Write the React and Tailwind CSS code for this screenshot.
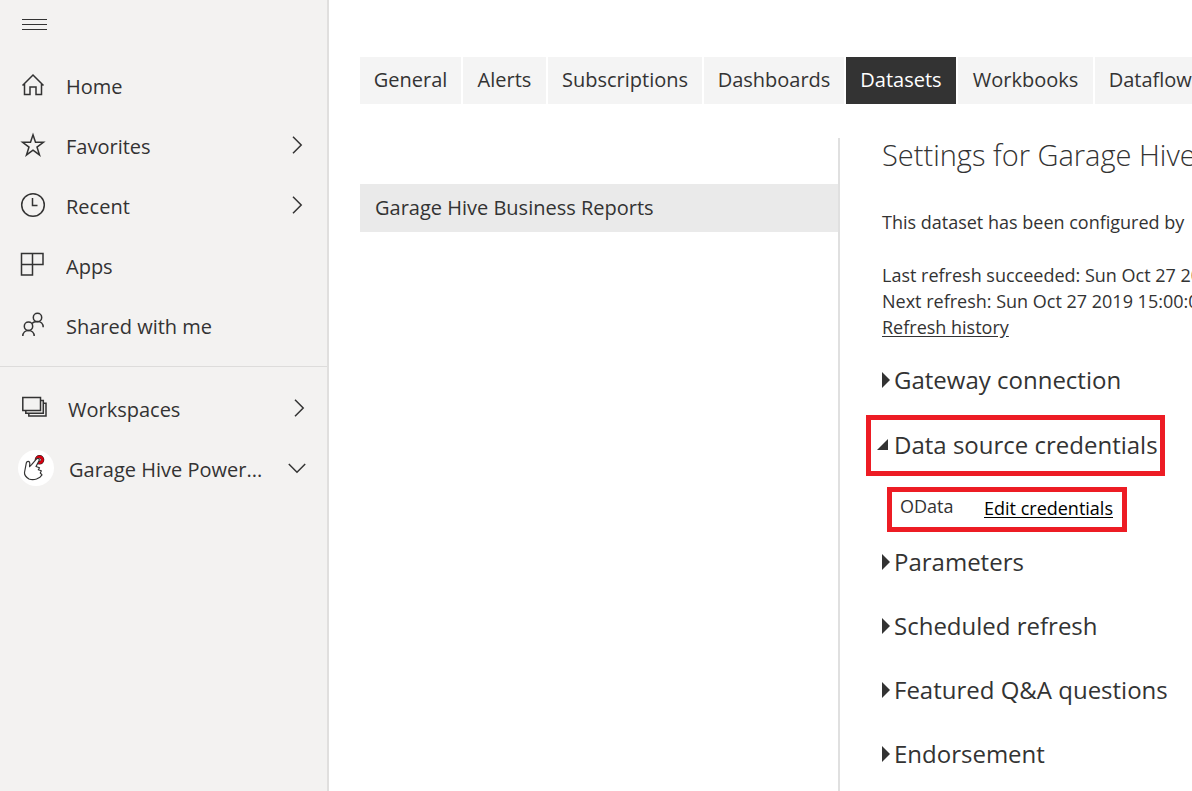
const stroke = { fill: 'none', stroke: '#333', strokeWidth: 1.5 };

function HomeIcon() {
  return (
    <svg width="26" height="26" viewBox="0 0 26 26" {...stroke} aria-hidden="true">
      <path d="M2.5 13.5 13 3l10.500 10.500M4.500 11.700V22.500H10V15h6v7.500h5.500V11.700" />
    </svg>
  );
}

function StarIcon() {
  return (
    <svg width="26" height="26" viewBox="0 0 26 26" {...stroke} aria-hidden="true">
      <path d="m13 2.800 2.500 7.500h7.900l-6.400 4.800 2.500 7.800-6.500-4.800-6.500 4.800L9 15.100l-6.400-4.800h7.900z" />
    </svg>
  );
}

function ClockIcon() {
  return (
    <svg width="26" height="26" viewBox="0 0 26 26" {...stroke} aria-hidden="true">
      <circle cx="13" cy="13" r="11.300" />
      <path d="M12.500 6v7.500h5" />
    </svg>
  );
}

function AppsIcon() {
  return (
    <svg width="26" height="26" viewBox="0 0 26 26" {...stroke} aria-hidden="true">
      <path d="M1.500 1.500h21.500v11H12.500v10.500h-11zM12.500 1.500v11M1.500 12.500h11" />
    </svg>
  );
}

function PeopleIcon() {
  return (
    <svg width="26" height="26" viewBox="0 0 26 26" {...stroke} aria-hidden="true">
      <circle cx="17.500" cy="5.500" r="4.200" />
      <circle cx="8.500" cy="14.300" r="4.200" />
      <path d="M2.800 24c0-3.500 2.500-5.500 5.700-5.500s5.700 2 5.700 5.500M11.800 11.500c1.200-1.300 3.200-2 5.700-2 3.300 0 5.700 2.200 5.700 5.700" />
    </svg>
  );
}

function WorkspacesIcon() {
  return (
    <svg width="26" height="26" viewBox="0 0 26 26" {...stroke} aria-hidden="true">
      <path d="M.8 2.500h17.700v13H.8zM18.500 5.500h2.800v12.800H3.800v-2.800M21.300 8.300h2.700v12.700H6.800v-2.700" />
    </svg>
  );
}

function HandLogo() {
  return (
    <svg width="36" height="36" viewBox="0 0 36 36" className="shrink-0" aria-hidden="true">
      <circle cx="18" cy="18" r="18" fill="#fff" />
      <circle cx="21.500" cy="9.800" r="3" fill="#fff" stroke="#222" strokeWidth="3.600" />
      <circle cx="21.500" cy="9.800" r="3" fill="none" stroke="#d80010" strokeWidth="2.600" />
      <path
        d="M11 29C8.500 27.500 6.300 25 6.500 22.500L8.300 13c.7-2.300 3.600-2 3.500.5l-.2 3.200 2-2 5.200-6c1.700-1 3.200.6 2.200 2.200L18 16.500l3.500 1.200-1.200 2 3 1-1 2.300 1.700 1.800-2 2.400-3.500 1.800c-2.500.9-5.200.9-7.500 0z"
        fill="#fff"
        stroke="#333"
        strokeWidth="1.200"
        strokeLinejoin="round"
      />
    </svg>
  );
}

function Chevron({ down }) {
  return (
    <svg width="18" height="18" viewBox="0 0 18 18" {...stroke} className="-mt-1 shrink-0" aria-hidden="true">
      <path d={down ? 'M.8 5 9 13.200 17.200 5' : 'M5 .8 13.200 9 5 17.200'} />
    </svg>
  );
}

function NavItem({ icon, label, chevron, inset = 'pl-5 pr-[21px]' }) {
  return (
    <li>
      <a href="#" className={`flex h-15 items-center pt-0.5 ${inset}`}>
        <span className="-mt-1 w-[46px] shrink-0">{icon}</span>
        <span className="flex-1 truncate">{label}</span>
        {chevron && <Chevron />}
      </a>
    </li>
  );
}

const tabs = [
  ['General', 'w-[101px]'],
  ['Alerts', 'w-[83px]'],
  ['Subscriptions', 'w-[154px]'],
  ['Dashboards', 'w-[140px]'],
  ['Datasets', 'w-[110px]'],
  ['Workbooks', 'w-[135px]'],
  ['Dataflows', 'w-[120px]'],
];

function Section({ title }) {
  return (
    <h2>
      <button type="button" aria-expanded="false" className="flex h-16 items-center gap-1 text-2xl">
        <svg width="8" height="16" viewBox="0 0 8 16" aria-hidden="true">
          <path d="M0 0 8 8 0 16z" fill="#333" />
        </svg>
        {title}
      </button>
    </h2>
  );
}

export default function App() {
  return (
    <div className="flex min-h-screen overflow-hidden bg-white font-['Open_Sans',sans-serif] text-xl whitespace-nowrap text-[#333]">
      <aside className="w-[329px] shrink-0 border-r-2 border-[#e0dfde] bg-[#f3f2f1]">
        <button type="button" aria-label="Toggle navigation" className="flex h-14 items-start pt-[19px] pl-[22px]">
          <svg width="25" height="11" viewBox="0 0 25 11" stroke="#333" aria-hidden="true">
            <path d="M0 .5h25M0 5.500h25M0 10.500h25" />
          </svg>
        </button>
        <nav aria-label="Main">
          <ul className="border-b border-[#dddcdb] pb-[10px]">
            <NavItem icon={<HomeIcon />} label="Home" />
            <NavItem icon={<StarIcon />} label="Favorites" chevron />
            <NavItem icon={<ClockIcon />} label="Recent" chevron />
            <NavItem icon={<AppsIcon />} label="Apps" />
            <NavItem icon={<PeopleIcon />} label="Shared with me" />
          </ul>
          <ul className="pt-3">
            <NavItem icon={<WorkspacesIcon />} label="Workspaces" chevron inset="pl-[22px] pr-[19px]" />
            <li>
              <a href="#" className="flex h-15 items-center gap-[15px] pt-0.5 pr-[21px] pl-[18px]">
                <span className="-mt-1">
                  <HandLogo />
                </span>
                <span className="flex-1 truncate">Garage Hive Power...</span>
                <Chevron down />
              </a>
            </li>
          </ul>
        </nav>
      </aside>

      <main className="flex min-w-0 flex-1 flex-col overflow-hidden pt-[57px] pl-[31px]">
        <nav aria-label="Settings" className="flex gap-0.5">
          {tabs.map(([name, width]) => (
            <a
              key={name}
              href="#"
              className={`${width} flex h-[47px] shrink-0 items-center justify-center pb-0.5 ${
                name === 'Datasets' ? 'bg-[#333] text-white' : 'bg-[#f4f4f4]'
              }`}
            >
              {name}
            </a>
          ))}
        </nav>

        <div className="mt-[34px] flex flex-1">
          <div className="w-[480px] shrink-0 border-r-2 border-[#e0e0e0] pt-[46px]">
            <a href="#" className="flex h-12 items-center bg-[#eaeaea] px-[15px]">
              Garage Hive Business Reports
            </a>
          </div>

          <section className="shrink-0 pl-[42px]">
            <h1 className="text-[29px] leading-[34px] font-light">Settings for Garage Hive</h1>
            <p className="mt-[37px] text-lg leading-[26px]">This dataset has been configured by</p>
            <div className="mt-[27px] text-lg leading-[26px]">
              <p>Last refresh succeeded: Sun Oct 27 2019</p>
              <p>Next refresh: Sun Oct 27 2019 15:00:00</p>
              <a href="#" className="underline underline-offset-2">Refresh history</a>
            </div>

            <div className="mt-2">
              <Section title="Gateway connection" />
              <h2 className="mt-[3px] -ml-4 w-[299px]">
                <button
                  type="button"
                  aria-expanded="true"
                  className="flex h-[61px] w-full items-center gap-1.5 border-5 border-[#ed1c24] pb-0.5 pl-1.5 text-2xl"
                >
                  <svg width="11" height="11" viewBox="0 0 11 11" className="shrink-0" aria-hidden="true">
                    <path d="M11 0v11H0z" fill="#333" />
                  </svg>
                  Data source credentials
                </button>
              </h2>
              <div className="mt-[11px] -mb-0.5 ml-[5px] flex h-[45px] w-60 items-center justify-between border-5 border-[#ed1c24] pr-[9px] pb-1 pl-2 text-lg">
                <span className="pb-1">OData</span>
                <a href="#" className="text-black underline underline-offset-2">Edit credentials</a>
              </div>
              <Section title="Parameters" />
              <Section title="Scheduled refresh" />
              <Section title="Featured Q&A questions" />
              <Section title="Endorsement" />
            </div>
          </section>
        </div>
      </main>
    </div>
  );
}
